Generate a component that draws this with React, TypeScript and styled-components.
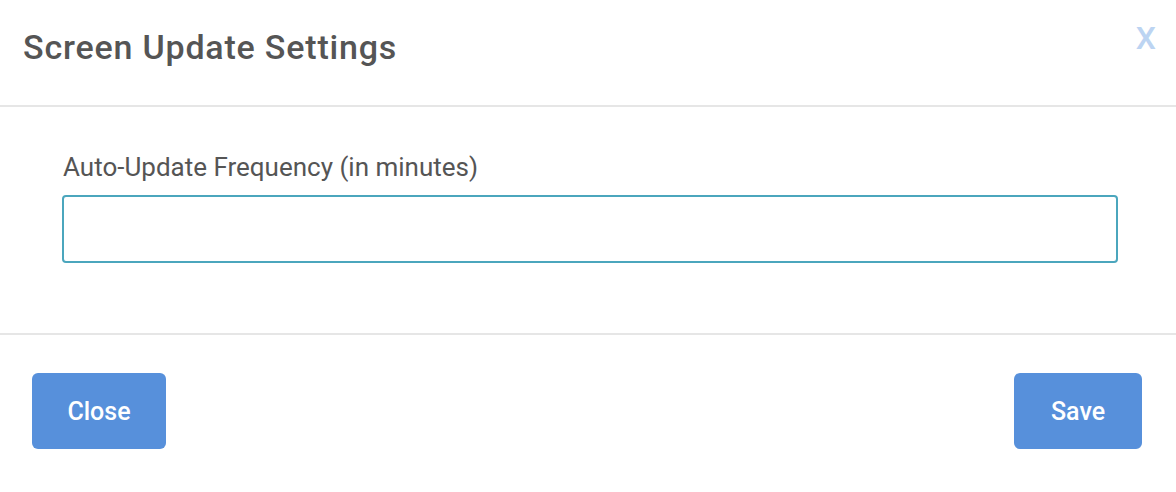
import styled, { createGlobalStyle } from 'styled-components';

const GlobalStyle = createGlobalStyle`
  html, body {
    margin: 0;
    padding: 0;
    background: #ffffff;
    font-family: Roboto, "Liberation Sans", Arial, sans-serif;
  }
  * {
    box-sizing: border-box;
  }
`;

const Modal = styled.div`
  width: 1176px;
  height: 492px;
  background: #ffffff;
  display: flex;
  flex-direction: column;
`;

const Header = styled.header`
  height: 107px;
  display: flex;
  justify-content: space-between;
  align-items: flex-start;
  padding: 0 20px 0 23px;
  border-bottom: 2px solid #e6e6e6;
`;

const Title = styled.h2`
  margin: 27px 0 0;
  font-size: 34px;
  font-weight: 500;
  letter-spacing: 0.8px;
  line-height: 40px;
  color: #555555;
`;

const CloseX = styled.button`
  margin-top: 19px;
  padding: 0;
  border: none;
  background: none;
  font-family: Roboto, "Liberation Sans", Arial, sans-serif;
  font-size: 32px;
  font-weight: 500;
  line-height: 38px;
  color: #bcd4f2;
  cursor: pointer;
`;

const Body = styled.div`
  height: 228px;
  padding: 44px 58px 0 62px;
  border-bottom: 2px solid #e6e6e6;
  display: flex;
  flex-direction: column;
  gap: 12px;
`;

const Label = styled.label`
  font-size: 26px;
  line-height: 32px;
  color: #555555;
  padding-left: 1px;
`;

const Input = styled.input`
  width: 1056px;
  height: 68px;
  border: 2px solid #4ba6bd;
  border-radius: 4px;
  padding: 0 16px;
  font-family: inherit;
  font-size: 22px;
  color: #555555;
  outline: none;
`;

const Footer = styled.footer`
  flex: 1;
  display: flex;
  justify-content: space-between;
  align-items: flex-start;
  padding: 38px 34px 0 32px;
`;

const Button = styled.button<{ $width: number }>`
  width: ${({ $width }) => $width}px;
  height: 76px;
  border: none;
  border-radius: 6px;
  background: #5790db;
  color: #ffffff;
  font-family: Roboto, "Liberation Sans", Arial, sans-serif;
  font-size: 25px;
  font-weight: 500;
  cursor: pointer;
`;

export default function App() {
  return (
    <>
      <GlobalStyle />
      <Modal>
        <Header>
          <Title>Screen Update Settings</Title>
          <CloseX type="button">X</CloseX>
        </Header>
        <Body>
          <Label htmlFor="freq">Auto-Update Frequency (in minutes)</Label>
          <Input id="freq" type="text" />
        </Body>
        <Footer>
          <Button type="button" $width={134}>Close</Button>
          <Button type="button" $width={128}>Save</Button>
        </Footer>
      </Modal>
    </>
  );
}
